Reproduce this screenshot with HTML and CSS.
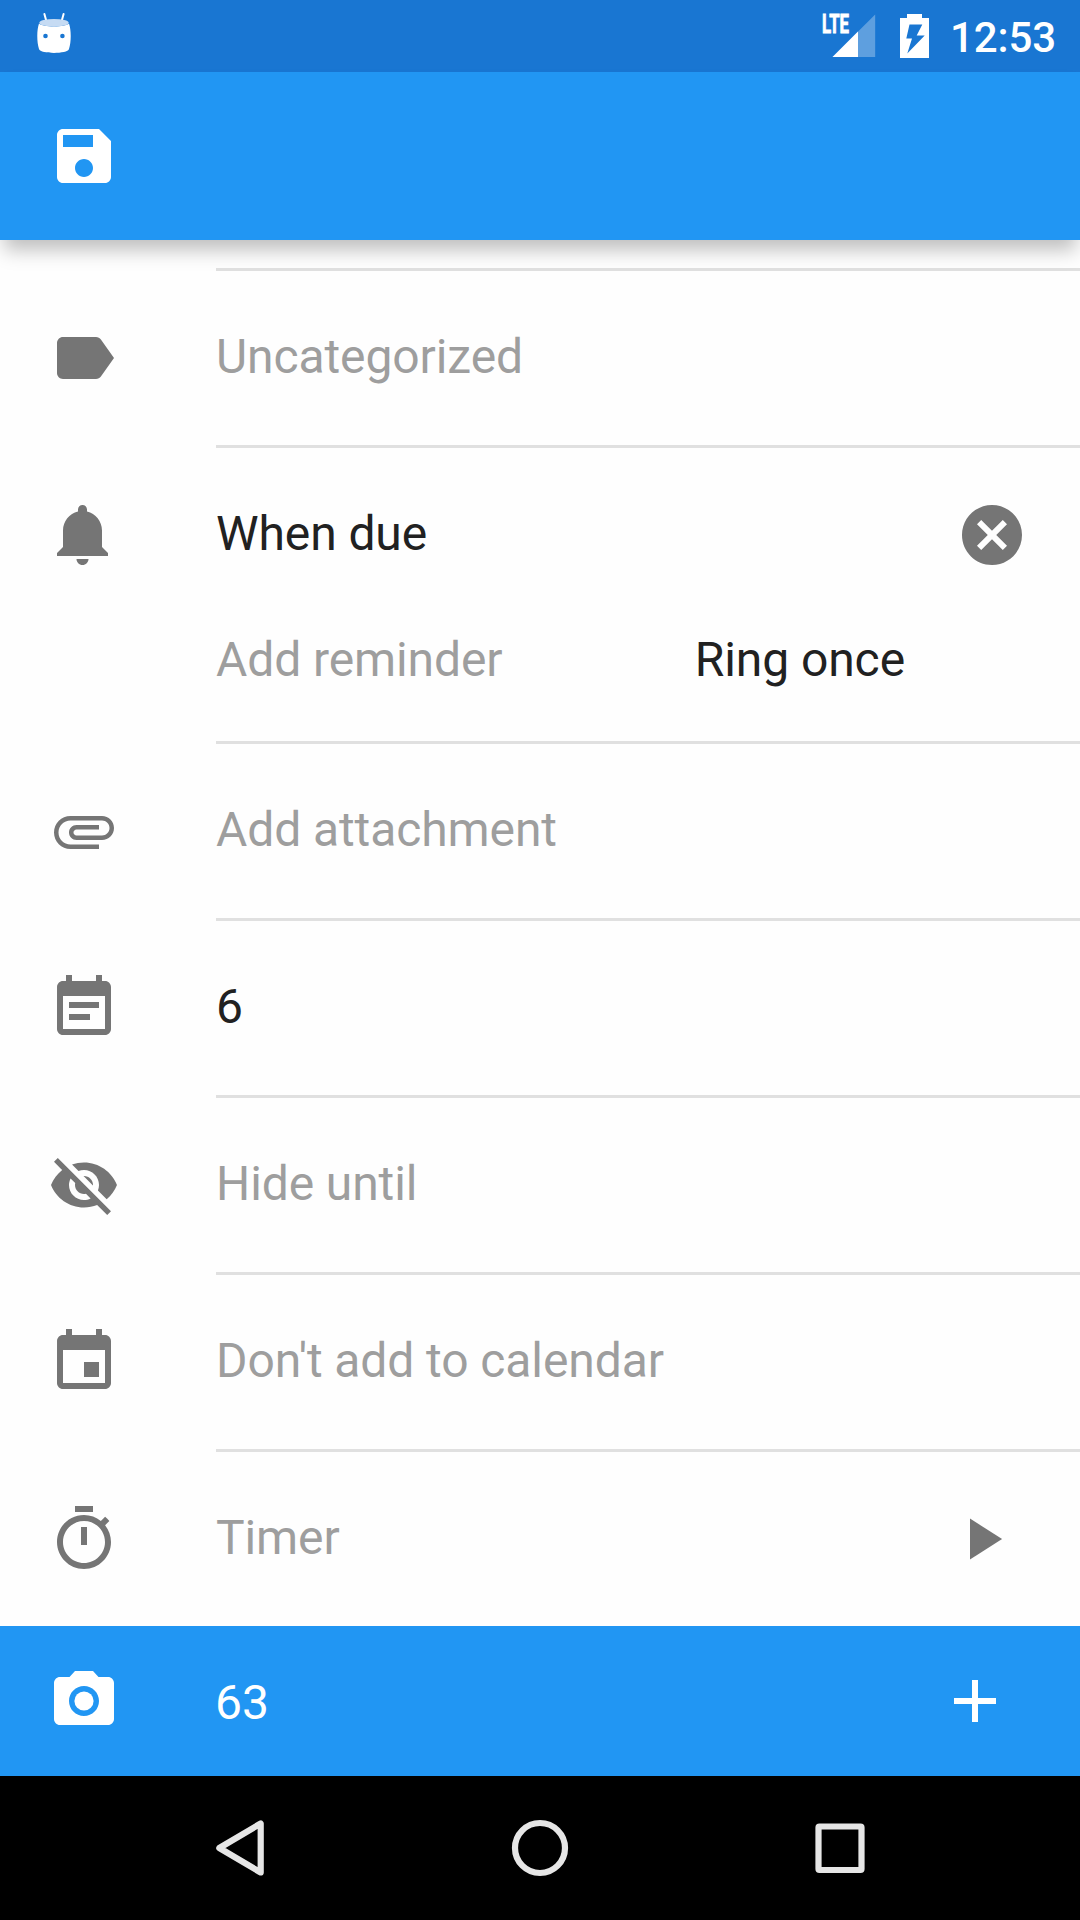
FILE: index.html
```html
<!DOCTYPE html>
<html lang="en">
<head>
<meta charset="utf-8">
<title>Edit task</title>
<link rel="stylesheet" href="styles.css">
</head>
<body>
<div class="screen">
  <header class="status-bar">
    <svg class="status-app" viewBox="0 0 36 42" aria-hidden="true">
      <path d="M8.4 2l2.2 8M27.6 2l-2.2 8" stroke="#fff" stroke-width="2" stroke-linecap="round"/>
      <path d="M3 11.500C7 15.500 29 15.500 33 11.500C35.300 18 35.300 30 33 37C31.500 42.200 4.500 42.200 3 37C.700 30 .700 18 3 11.500z" fill="#fff"/>
      <ellipse cx="18" cy="10.800" rx="14.700" ry="3.900" fill="#c6dbf3"/>
      <circle cx="9.500" cy="24" r="2.300" fill="#1976d2"/>
      <circle cx="26.400" cy="24" r="2.300" fill="#1976d2"/>
    </svg>
    <div class="status-right">
      <svg class="status-signal" viewBox="0 0 54 44" aria-hidden="true">
        <path d="M10.500 43L53.200 .500V43z" fill="#fff" fill-opacity=".3"/>
        <path d="M10.500 43L36 17.600V43z" fill="#fff"/>
        <text class="lte" x="0" y="19" textLength="27" lengthAdjust="spacingAndGlyphs">LTE</text>
      </svg>
      <svg class="status-battery" viewBox="0 0 29 44" aria-hidden="true">
        <path fill="#fff" fill-rule="evenodd" d="M7 0H22V4H29V44H0V4H7zM9.500 10.500L6.300 24.500H12L7.300 39.500L24.700 21.500H16.700L22.300 10.500z"/>
      </svg>
      <span class="clock">12:53</span>
    </div>
  </header>

  <div class="toolbar">
    <svg class="icon" viewBox="0 0 24 24"><path d="M17 3H5c-1.110 0-2 .900-2 2v14c0 1.100.890 2 2 2h14c1.100 0 2-.900 2-2V7l-4-4zm-5 16c-1.660 0-3-1.340-3-3s1.340-3 3-3 3 1.340 3 3-1.340 3-3 3zm3-10H5V5h10v4z"/></svg>
  </div>

  <main class="form">
    <div class="row row-scrolled"><div class="field"></div></div>

    <div class="row">
      <svg class="icon" viewBox="0 0 24 24"><path d="M17.630 5.840C17.270 5.330 16.670 5 16 5L5 5.010C3.900 5.010 3 5.900 3 7v10c0 1.100.900 1.990 2 1.990L16 19c.670 0 1.270-.330 1.630-.840L22 12l-4.370-6.160z"/></svg>
      <div class="field"><span class="hint">Uncategorized</span></div>
    </div>

    <div class="row row-reminder">
      <svg class="icon" viewBox="0 0 24 24"><path d="M11.500 22c1.100 0 2-.900 2-2h-4c0 1.100.900 2 2 2zm6.500-6v-5.500c0-3.070-2.130-5.640-5-6.320V3.500c0-.830-.670-1.500-1.500-1.500S10 2.670 10 3.500v.680c-2.870.680-5 3.250-5 6.320V16l-2 2v1h17v-1l-2-2z"/></svg>
      <div class="field field-stack">
        <div class="line line-due">
          <span>When due</span>
          <svg class="icon icon-clear" viewBox="0 0 24 24"><path d="M12 2C6.470 2 2 6.470 2 12s4.470 10 10 10 10-4.470 10-10S17.530 2 12 2zm5 13.590L15.590 17 12 13.410 8.410 17 7 15.590 10.590 12 7 8.410 8.410 7 12 10.590 15.590 7 17 8.410 13.410 12 17 15.590z"/></svg>
        </div>
        <div class="line line-add">
          <span class="hint">Add reminder</span>
          <span>Ring once</span>
        </div>
      </div>
    </div>

    <div class="row">
      <svg class="icon" viewBox="0 0 24 24"><path d="M7.500 18C4.460 18 2 15.540 2 12.500S4.460 7 7.500 7H18c2.210 0 4 1.790 4 4s-1.790 4-4 4H9.500C8.120 15 7 13.880 7 12.500S8.120 10 9.500 10H17v1.500H9.500c-.550 0-1 .450-1 1s.450 1 1 1H18c1.380 0 2.500-1.120 2.500-2.500S19.380 8.500 18 8.500H7.500c-2.210 0-4 1.790-4 4s1.790 4 4 4H17V18H7.500z"/></svg>
      <div class="field"><span class="hint">Add attachment</span></div>
    </div>

    <div class="row">
      <svg class="icon" viewBox="0 0 24 24"><path d="M17 10H7v2h10v-2zm2-7h-1V1h-2v2H8V1H6v2H5c-1.110 0-1.990.900-1.990 2L3 19c0 1.100.890 2 2 2h14c1.100 0 2-.900 2-2V5c0-1.100-.900-2-2-2zm0 16H5V8h14v11zm-5-5H7v2h7v-2z"/></svg>
      <div class="field"><span>6</span></div>
    </div>

    <div class="row">
      <svg class="icon" viewBox="0 0 24 24"><path d="M12 7c2.760 0 5 2.240 5 5 0 .650-.130 1.260-.360 1.830l2.920 2.920c1.510-1.260 2.700-2.890 3.430-4.750-1.730-4.390-6-7.500-11-7.500-1.400 0-2.740.250-3.980.700l2.160 2.160C10.740 7.130 11.350 7 12 7zM2 4.270l2.280 2.280.460.460C3.080 8.300 1.780 10.020 1 12c1.730 4.390 6 7.500 11 7.500 1.550 0 3.030-.300 4.380-.840l.420.420L19.730 22 21 20.730 3.270 3 2 4.270zM7.530 9.800l1.550 1.550c-.050.210-.080.430-.080.650 0 1.660 1.340 3 3 3 .220 0 .440-.030.650-.080l1.550 1.550c-.670.330-1.410.530-2.200.530-2.760 0-5-2.240-5-5 0-.790.200-1.530.530-2.200zm4.310-.780l3.150 3.150.020-.160c0-1.660-1.340-3-3-3l-.170.010z"/></svg>
      <div class="field"><span class="hint">Hide until</span></div>
    </div>

    <div class="row">
      <svg class="icon" viewBox="0 0 24 24"><path d="M17 12h-5v5h5v-5zM16 1v2H8V1H6v2H5c-1.110 0-1.990.900-1.990 2L3 19c0 1.100.890 2 2 2h14c1.100 0 2-.900 2-2V5c0-1.100-.900-2-2-2h-1V1h-2zm3 18H5V8h14v11z"/></svg>
      <div class="field"><span class="hint">Don't add to calendar</span></div>
    </div>

    <div class="row row-last">
      <svg class="icon" viewBox="0 0 24 24"><path d="M15 1H9v2h6V1zm-4 13h2V8h-2v6zm8.030-6.610l1.420-1.420c-.430-.510-.900-.990-1.410-1.410l-1.420 1.420C16.070 4.740 14.120 4 12 4c-4.970 0-9 4.030-9 9s4.020 9 9 9 9-4.030 9-9c0-2.120-.740-4.070-1.970-5.610zM12 20c-3.870 0-7-3.130-7-7s3.130-7 7-7 7 3.130 7 7-3.130 7-7 7z"/></svg>
      <div class="field">
        <span class="hint">Timer</span>
        <svg class="icon icon-play" viewBox="0 0 24 24"><path d="M8 5.200v13.600l10.700-6.800z"/></svg>
      </div>
    </div>
  </main>

  <div class="comment-bar">
    <svg class="icon" viewBox="0 0 24 24"><circle cx="12" cy="12" r="3.200"/><path d="M9 2L7.170 4H4c-1.100 0-2 .900-2 2v12c0 1.100.900 2 2 2h16c1.100 0 2-.900 2-2V6c0-1.100-.900-2-2-2h-3.170L15 2H9zm3 15c-2.760 0-5-2.240-5-5s2.240-5 5-5 5 2.240 5 5-2.240 5-5 5z"/></svg>
    <span class="comment-count">63</span>
    <svg class="icon" viewBox="0 0 24 24"><path d="M19 13h-6v6h-2v-6H5v-2h6V5h2v6h6v2z"/></svg>
  </div>

  <nav class="nav-bar">
    <svg class="nav-icon" viewBox="0 0 60 60"><path d="M9.300 30L50.700 5.500V54.500z"/></svg>
    <svg class="nav-icon" viewBox="0 0 60 60"><circle cx="30" cy="30" r="25"/></svg>
    <svg class="nav-icon" viewBox="0 0 60 60"><rect x="8.500" y="8.500" width="43" height="43.500" rx="1"/></svg>
  </nav>
</div>
</body>
</html>
```
FILE: styles.css
```css
* { box-sizing: border-box; }

body {
  margin: 0;
  font-family: Roboto, "Liberation Sans", sans-serif;
  font-size: 48px;
  line-height: 56px;
  letter-spacing: -.1px;
  color: #212121;
}

svg { display: block; flex: none; }

.screen {
  width: 1080px;
  height: 1920px;
  display: flex;
  flex-direction: column;
  background: #fefefe;
  overflow: hidden;
}

.status-bar {
  height: 72px;
  display: flex;
  justify-content: space-between;
  align-items: flex-start;
  padding: 0 24px 0 36px;
  background: #1976d2;
  color: #fff;
}

.status-app { width: 36px; height: 42px; margin-top: 12px; }

.status-right { display: flex; align-items: flex-start; }

.status-signal { width: 54px; height: 44px; margin: 14px 24px 0 0; overflow: visible; }

.lte {
  font-size: 25.500px;
  font-weight: 700;
  letter-spacing: 0;
  fill: #fff;
  stroke: #fff;
  stroke-width: .900;
}

.status-battery { width: 29px; height: 44px; margin: 14px 21px 0 0; }

.clock {
  font-size: 42px;
  font-weight: 500;
  line-height: 50px;
  margin-top: 13px;
}

.toolbar {
  height: 168px;
  flex: none;
  display: flex;
  align-items: center;
  padding: 0 48px;
  background: #2196f3;
  color: #fff;
  box-shadow: 0 14px 18px -4px rgba(0, 0, 0, .25);
  z-index: 1;
}

.icon { width: 72px; height: 72px; fill: currentColor; }

.form { flex: 1; }

.row {
  height: 177px;
  display: flex;
  padding-left: 48px;
}

.row > .icon { margin: 51px 96px 0 0; color: #757575; }

.field {
  flex: 1;
  display: flex;
  align-items: center;
  justify-content: space-between;
  border-bottom: 3px solid #e0e0e0;
  padding-bottom: 2px;
}

.row-scrolled { height: 31px; padding-left: 216px; }

.row-reminder { height: 296px; }

.field-stack { display: block; padding: 0; }

.line { display: flex; align-items: center; justify-content: space-between; }

.line-due { height: 172px; padding-right: 52px; }

.icon-clear { margin-top: 2px; color: #757575; }

.line-add { height: 82px; align-items: flex-start; margin-top: 12px; padding-right: 175px; }

.row-last { height: 174px; }

.row-last .field { border-bottom: 0; }

.icon-play { margin: 2px 62px 0 0; color: #757575; }

.hint { color: #9e9e9e; }

.comment-bar {
  height: 150px;
  display: flex;
  align-items: center;
  padding: 0 69px 0 48px;
  background: #2196f3;
  color: #fff;
}

.comment-count { flex: 1; margin-left: 95px; padding-top: 3px; }

.nav-bar {
  height: 144px;
  display: flex;
  justify-content: center;
  align-items: center;
  gap: 240px;
  background: #000;
}

.nav-icon {
  width: 60px;
  height: 60px;
  fill: none;
  stroke: #e6e6e6;
  stroke-width: 6.200;
  stroke-linejoin: round;
}
```
